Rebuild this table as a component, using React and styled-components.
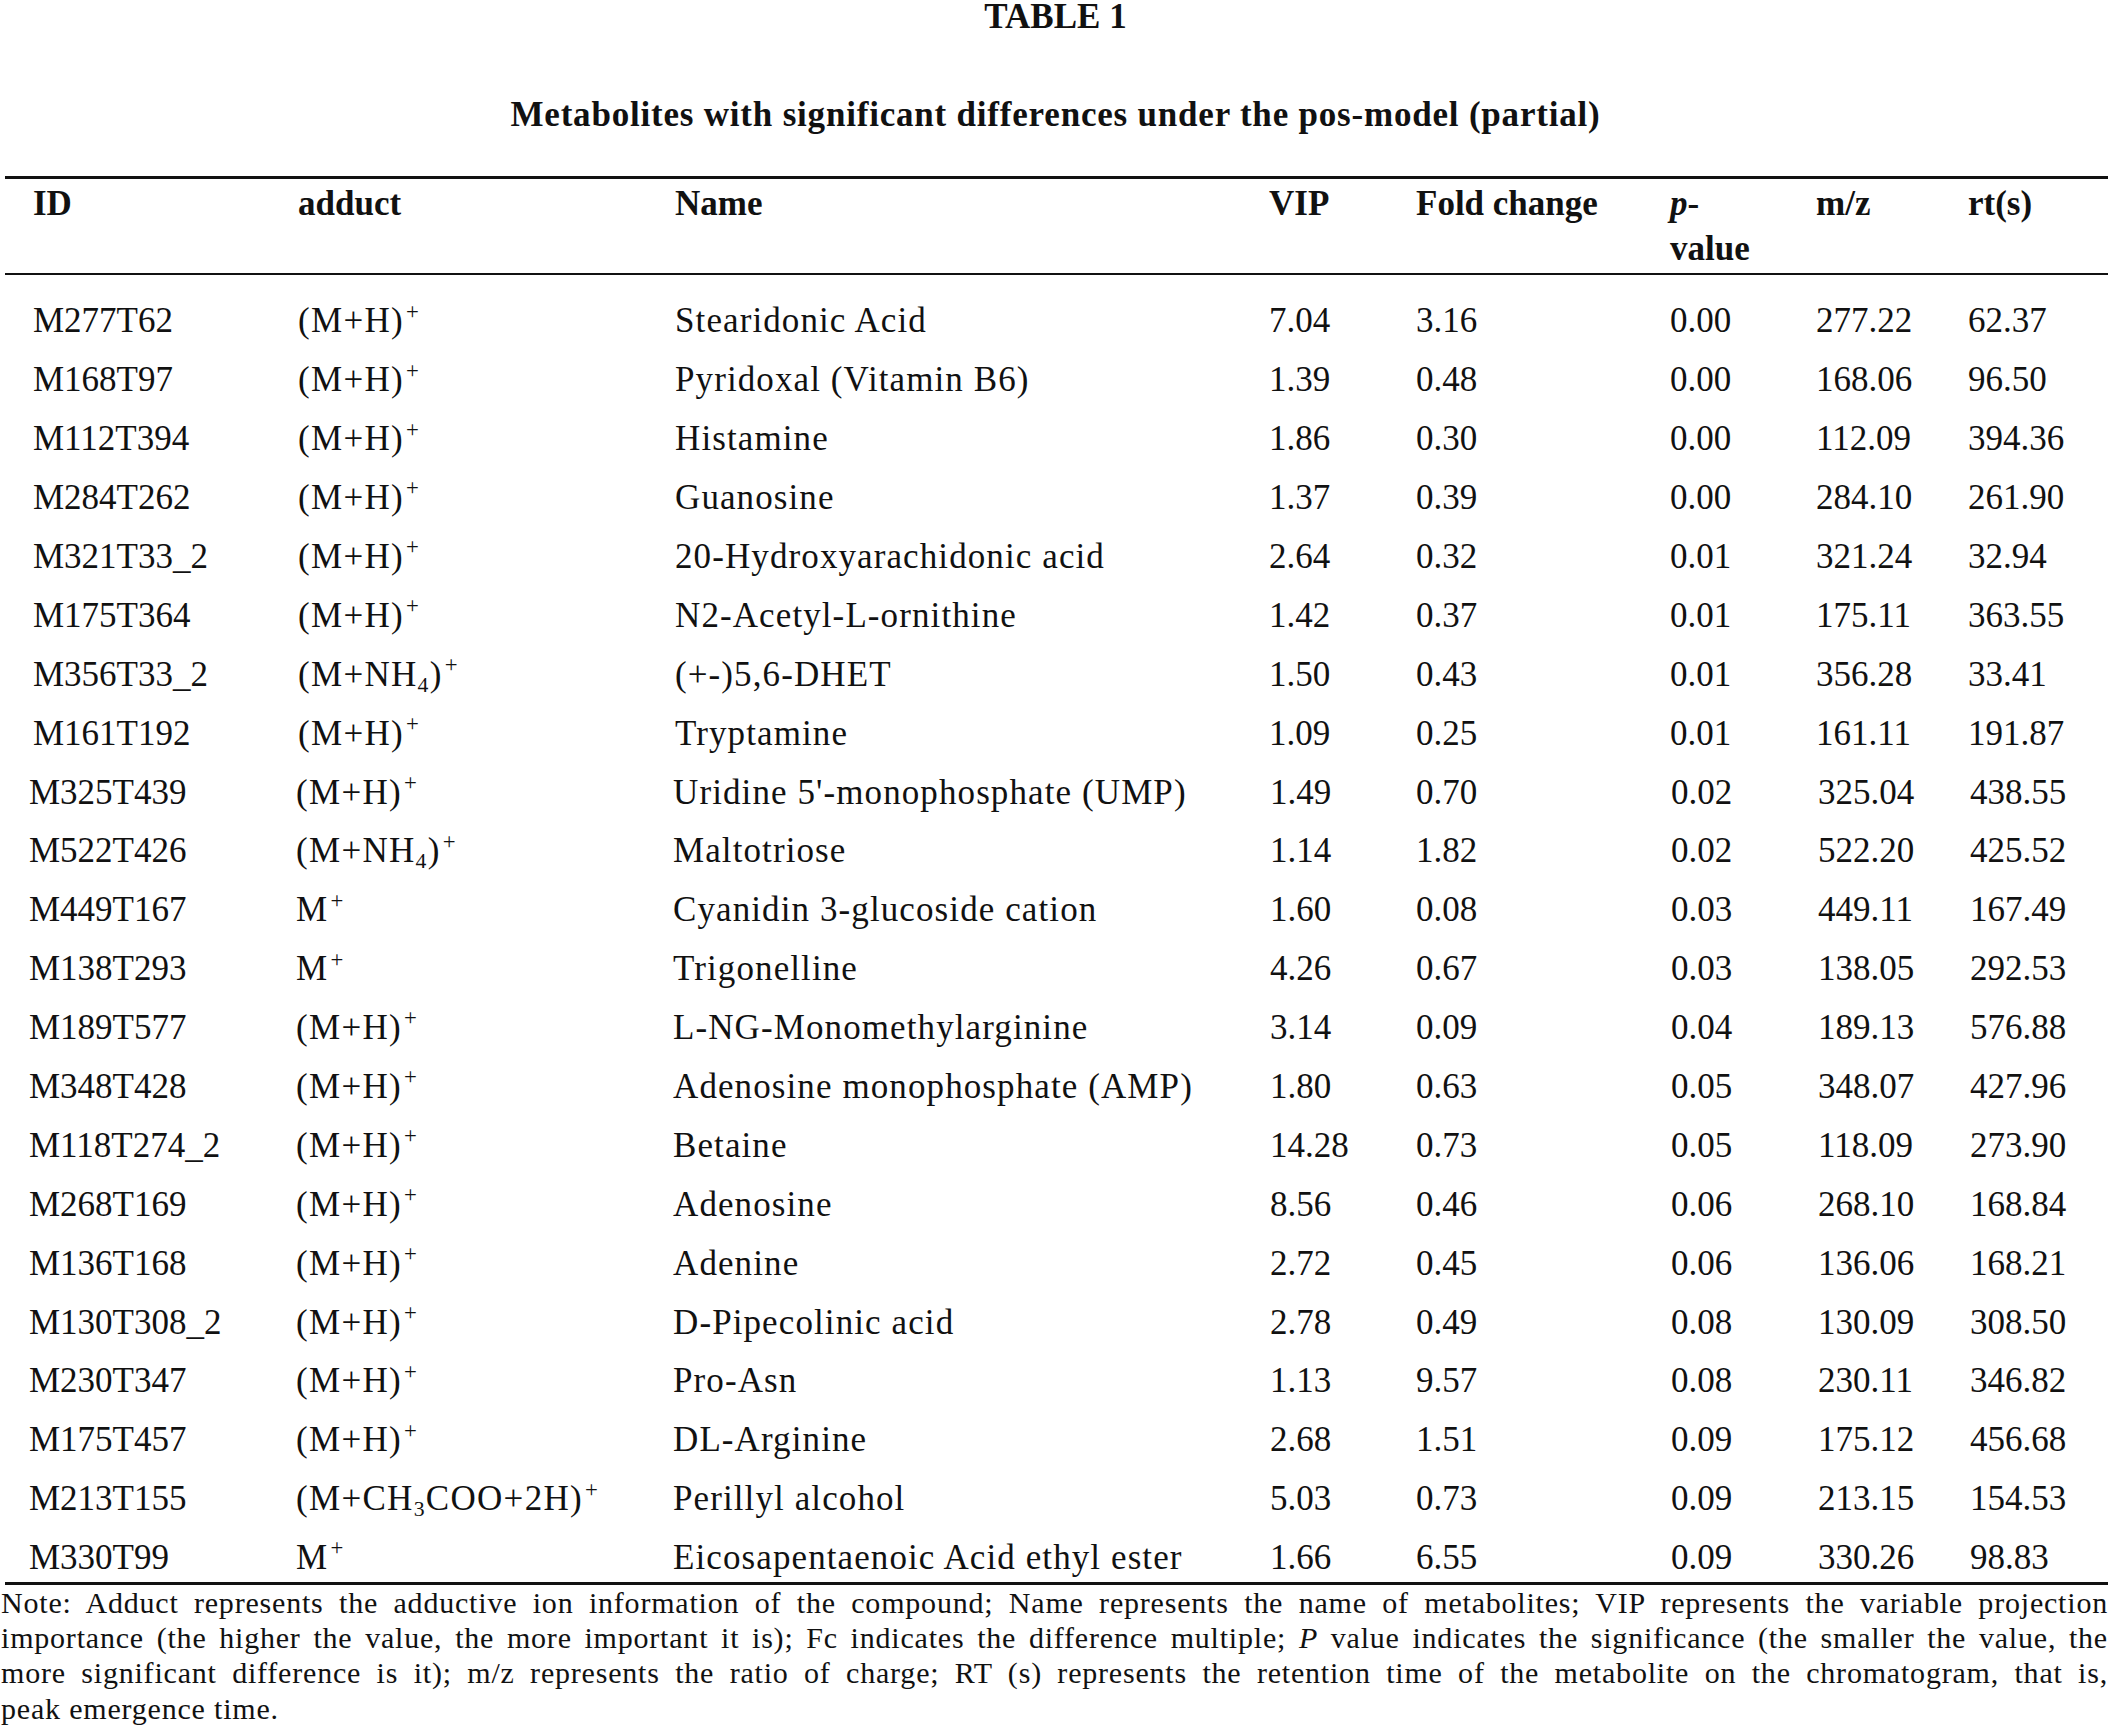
import React from "react";
import styled, { createGlobalStyle, css } from "styled-components";

const GlobalStyle = createGlobalStyle`
  html, body { margin: 0; padding: 0; background: #ffffff; }
  body {
    font-family: "Liberation Serif", "Times New Roman", serif;
    color: #111111;
  }
`;

const Page = styled.div`
  width: 2111px;
  min-height: 1735px;
  display: flex;
  flex-direction: column;
`;

const Caption = styled.div`
  text-align: center;
  font-weight: 700;
  font-size: 35px;
  line-height: 28.4px;
  padding-top: 3px;
`;

const Title = styled.div`
  text-align: center;
  font-weight: 700;
  font-size: 35px;
  line-height: 40px;
  letter-spacing: 0.8px;
  margin: 63.8px 0 40.8px;
`;

const Table = styled.div`
  margin: 0 3px 0 5px;
  border-top: 3px solid #111111;
  border-bottom: 3px solid #111111;
`;

const columns = css`
  display: grid;
  grid-template-columns: 265px 377px 594px 147px 254px 146px 152px 1fr;
  padding-left: 28px;
  white-space: nowrap;
`;

const HeadRow = styled.div`
  ${columns}
  padding-top: 1.7px;
  padding-bottom: 2.3px;
  border-bottom: 2px solid #111111;
  font-weight: 700;
  font-size: 35px;
  line-height: 45px;
  letter-spacing: 0.6px;
`;

const Body = styled.div`
  display: flex;
  flex-direction: column;
  row-gap: 11.3px;
  padding-top: 22.4px;
`;

const Row = styled.div`
  ${columns}
  font-size: 35px;
  line-height: 47.6px;
  ${(p) =>
    p.$late &&
    css`
      grid-template-columns: 267px 377px 597px 146px 255px 147px 152px 1fr;
      padding-left: 24px;
    `}
`;

const Cell = styled.div`
  letter-spacing: ${(p) => (p.$spaced ? `${p.$spaced}px` : "normal")};
`;

const Ital = styled.i`
  font-style: italic;
`;

const Sup = styled.sup`
  font-size: 0.65em;
  vertical-align: 0.6em;
  line-height: 0;
  margin-left: 2px;
`;

const Sub = styled.sub`
  font-size: 0.62em;
  vertical-align: -0.28em;
  line-height: 0;
`;

const Note = styled.div`
  margin: 0 3px 0 1px;
  font-size: 30px;
  line-height: 35.3px;
  letter-spacing: 0.8px;
`;

const NoteLine = styled.div`
  text-align: justify;
  text-align-last: ${(p) => (p.$last ? "left" : "justify")};
`;

const Adduct = ({ kind }) => {
  if (kind === "H")
    return (
      <>
        (M+H)<Sup>+</Sup>
      </>
    );
  if (kind === "NH4")
    return (
      <>
        (M+NH<Sub>4</Sub>)<Sup>+</Sup>
      </>
    );
  if (kind === "AC")
    return (
      <>
        (M+CH<Sub>3</Sub>COO+2H)<Sup>+</Sup>
      </>
    );
  return (
    <>
      M<Sup>+</Sup>
    </>
  );
};

const rows = [
  ["M277T62", "H", "Stearidonic Acid", "7.04", "3.16", "0.00", "277.22", "62.37"],
  ["M168T97", "H", "Pyridoxal (Vitamin B6)", "1.39", "0.48", "0.00", "168.06", "96.50"],
  ["M112T394", "H", "Histamine", "1.86", "0.30", "0.00", "112.09", "394.36"],
  ["M284T262", "H", "Guanosine", "1.37", "0.39", "0.00", "284.10", "261.90"],
  ["M321T33_2", "H", "20-Hydroxyarachidonic acid", "2.64", "0.32", "0.01", "321.24", "32.94"],
  ["M175T364", "H", "N2-Acetyl-L-ornithine", "1.42", "0.37", "0.01", "175.11", "363.55"],
  ["M356T33_2", "NH4", "(+-)5,6-DHET", "1.50", "0.43", "0.01", "356.28", "33.41"],
  ["M161T192", "H", "Tryptamine", "1.09", "0.25", "0.01", "161.11", "191.87"],
  ["M325T439", "H", "Uridine 5'-monophosphate (UMP)", "1.49", "0.70", "0.02", "325.04", "438.55"],
  ["M522T426", "NH4", "Maltotriose", "1.14", "1.82", "0.02", "522.20", "425.52"],
  ["M449T167", "M", "Cyanidin 3-glucoside cation", "1.60", "0.08", "0.03", "449.11", "167.49"],
  ["M138T293", "M", "Trigonelline", "4.26", "0.67", "0.03", "138.05", "292.53"],
  ["M189T577", "H", "L-NG-Monomethylarginine", "3.14", "0.09", "0.04", "189.13", "576.88"],
  ["M348T428", "H", "Adenosine monophosphate (AMP)", "1.80", "0.63", "0.05", "348.07", "427.96"],
  ["M118T274_2", "H", "Betaine", "14.28", "0.73", "0.05", "118.09", "273.90"],
  ["M268T169", "H", "Adenosine", "8.56", "0.46", "0.06", "268.10", "168.84"],
  ["M136T168", "H", "Adenine", "2.72", "0.45", "0.06", "136.06", "168.21"],
  ["M130T308_2", "H", "D-Pipecolinic acid", "2.78", "0.49", "0.08", "130.09", "308.50"],
  ["M230T347", "H", "Pro-Asn", "1.13", "9.57", "0.08", "230.11", "346.82"],
  ["M175T457", "H", "DL-Arginine", "2.68", "1.51", "0.09", "175.12", "456.68"],
  ["M213T155", "AC", "Perillyl alcohol", "5.03", "0.73", "0.09", "213.15", "154.53"],
  ["M330T99", "M", "Eicosapentaenoic Acid ethyl ester", "1.66", "6.55", "0.09", "330.26", "98.83"],
];

export default function App() {
  return (
    <Page>
      <GlobalStyle />
      <Caption>TABLE 1</Caption>
      <Title>Metabolites with significant differences under the pos-model (partial)</Title>
      <Table>
        <HeadRow>
          <Cell>ID</Cell>
          <Cell>adduct</Cell>
          <Cell>Name</Cell>
          <Cell>VIP</Cell>
          <Cell>Fold change</Cell>
          <Cell>
            <Ital>p</Ital>-
            <br />
            value
          </Cell>
          <Cell>m/z</Cell>
          <Cell>rt(s)</Cell>
        </HeadRow>
        <Body>
          {rows.map((r, i) => (
            <Row key={r[0]} $late={i >= 8}>
              <Cell>{r[0]}</Cell>
              <Cell $spaced={1.3}>
                <Adduct kind={r[1]} />
              </Cell>
              <Cell $spaced={1.1}>{r[2]}</Cell>
              <Cell>{r[3]}</Cell>
              <Cell>{r[4]}</Cell>
              <Cell>{r[5]}</Cell>
              <Cell>{r[6]}</Cell>
              <Cell>{r[7]}</Cell>
            </Row>
          ))}
        </Body>
      </Table>
      <Note>
        <NoteLine>
          Note: Adduct represents the adductive ion information of the compound; Name represents the name of
          metabolites; VIP represents the variable projection
        </NoteLine>
        <NoteLine>
          importance (the higher the value, the more important it is); Fc indicates the difference multiple;{" "}
          <Ital>P</Ital> value indicates the significance (the smaller the value, the
        </NoteLine>
        <NoteLine>
          more significant difference is it); m/z represents the ratio of charge; RT (s) represents the retention time
          of the metabolite on the chromatogram, that is,
        </NoteLine>
        <NoteLine $last>peak emergence time.</NoteLine>
      </Note>
    </Page>
  );
}
